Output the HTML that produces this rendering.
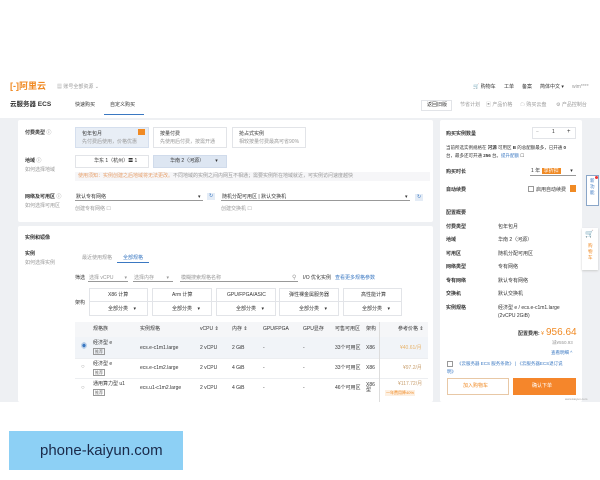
<!DOCTYPE html>
<html><head><meta charset="utf-8"><style>
*{margin:0;padding:0;box-sizing:border-box}
body{width:600px;height:480px;background:#fff;position:relative;overflow:hidden;font-family:"Liberation Sans","Noto Sans CJK SC",sans-serif;color:#333;font-size:5px}
.a{position:absolute;white-space:nowrap;line-height:1}
.g{color:#999}.b{font-weight:bold}.bl{color:#3a78c2}.o{color:#f08a24}
.card{position:absolute;background:#fff;border-radius:2px}
.box{position:absolute;border:1px solid #e2e4e8;background:#fff}
.sel{position:absolute;border-bottom:1px solid #999;height:8px}
.tag{position:absolute;border:1px solid #999;font-size:4px;padding:0 1px;line-height:5px;color:#666}
</style></head><body>
<div class="a" style="left:10px;top:82px;font-size:9px;color:#f08a24;font-weight:bold">[-]阿里云</div>
<div class="a g" style="left:57px;top:85px">▦ 账号全部资源 ⌄</div>
<div class="a" style="left:473px;top:85px">🛒 购物车</div>
<div class="a" style="left:504px;top:85px">工单</div>
<div class="a" style="left:522px;top:85px">备案</div>
<div class="a" style="left:540px;top:85px">简体中文 ▾</div>
<div class="a g" style="left:572px;top:85px">wim****</div>
<div class="a b" style="left:10px;top:102px;font-size:6.5px">云服务器 ECS</div>
<div class="a" style="left:75px;top:103px">快速购买</div>
<div class="a" style="left:110px;top:103px">自定义购买</div>
<div style="position:absolute;left:104px;top:114px;width:40px;height:1px;background:#3a78c2"></div>
<div class="box" style="left:421px;top:100px;width:31px;height:11px"></div>
<div class="a" style="left:427px;top:103px">返回旧版</div>
<div class="a g" style="left:460px;top:103px">节省计划</div>
<div class="a g" style="left:486px;top:103px">▣ 产品价格</div>
<div class="a g" style="left:520px;top:103px">☁ 购买云盘</div>
<div class="a g" style="left:556px;top:103px">⚙ 产品控制台</div>
<div style="position:absolute;left:0;top:118px;width:600px;height:284px;background:#eef0f3"></div>

<div class="card" style="left:18px;top:120px;width:415px;height:102px">
</div>
<div class="a b" style="left:25px;top:131px">付费类型 <span class="g">ⓘ</span></div>
<div class="box" style="left:75px;top:127px;width:74px;height:21px;background:#e8eef6;border-color:#d5dfee"></div>
<div style="position:absolute;left:138px;top:129px;width:7px;height:6px;background:#f08a24"></div>
<div class="a" style="left:82px;top:132px">包年包月</div><div class="a g" style="left:82px;top:140px">先付费后使用，价格优惠</div>
<div class="box" style="left:153px;top:127px;width:74px;height:21px"></div>
<div class="a" style="left:160px;top:132px">按量付费</div><div class="a g" style="left:160px;top:140px">先使用后付费，按需开通</div>
<div class="box" style="left:232px;top:127px;width:74px;height:21px"></div>
<div class="a" style="left:239px;top:132px">抢占式实例</div><div class="a g" style="left:239px;top:140px">相较按量付费最高可省90%</div>
<div class="a b" style="left:25px;top:159px">地域 <span class="g">ⓘ</span></div><div class="a g" style="left:25px;top:168px">如何选择地域</div>
<div class="box" style="left:75px;top:155px;width:74px;height:13px"></div><div class="a" style="left:94px;top:159px">华东 1（杭州）〓 1</div>
<div class="box" style="left:153px;top:155px;width:74px;height:13px;background:#dde6f2;border-color:#d0dbeb"></div><div class="a" style="left:170px;top:159px">华南 2（河源）&nbsp;&nbsp;&nbsp;&nbsp;&nbsp;&nbsp;&nbsp;&nbsp;▾</div>
<div style="position:absolute;left:75px;top:172px;width:355px;height:9px;background:#f6f6f8"></div>
<div class="a" style="left:78px;top:174px;color:#e8a06a">使用须知：实例创建之后地域将无法更改。<span class="g">不同地域的实例之间内网互不相通；需要实例所在地域就近，可实例访问速度越快</span></div>
<div class="a b" style="left:25px;top:195px">网络及可用区 <span class="g">ⓘ</span></div><div class="a g" style="left:25px;top:204px">如何选择可用区</div>
<div class="sel" style="left:75px;top:193px;width:128px"></div><div class="a" style="left:76px;top:195px">默认专有网络</div><div class="a" style="left:198px;top:195px">▾</div>
<div class="a bl" style="left:207px;top:193px;background:#e4ecf6;padding:1px 2px">↻</div>
<div class="sel" style="left:221px;top:193px;width:189px"></div><div class="a" style="left:222px;top:195px">随机分配可用区 | 默认交换机</div><div class="a" style="left:405px;top:195px">▾</div>
<div class="a bl" style="left:415px;top:194px;background:#e4ecf6;padding:1px 2px">↻</div>
<div class="a g" style="left:75px;top:207px">创建专有网络 ☐</div><div class="a g" style="left:221px;top:207px">创建交换机 ☐</div>

<div class="card" style="left:18px;top:226px;width:415px;height:176px"></div>
<div class="a b" style="left:25px;top:236px">实例和镜像</div>
<div class="a b" style="left:25px;top:252px">实例</div><div class="a g" style="left:25px;top:261px">如何选择实例</div>
<div class="a g" style="left:82px;top:256px">最近使用规格</div>
<div class="a bl" style="left:123px;top:256px">全部规格</div>
<div style="position:absolute;left:117px;top:262px;width:32px;height:1px;background:#3a78c2"></div>
<div class="a" style="left:75px;top:276px">筛选</div>
<div class="sel" style="left:88px;top:274px;width:40px"></div><div class="a g" style="left:89px;top:276px">选择 vCPU&nbsp;&nbsp;&nbsp;&nbsp;&nbsp;&nbsp;&nbsp;&nbsp;▾</div>
<div class="sel" style="left:133px;top:274px;width:40px"></div><div class="a g" style="left:134px;top:276px">选择内存&nbsp;&nbsp;&nbsp;&nbsp;&nbsp;&nbsp;&nbsp;&nbsp;&nbsp;▾</div>
<div class="sel" style="left:180px;top:274px;width:118px"></div><div class="a g" style="left:181px;top:276px">模糊搜索规格名称</div><div class="a g" style="left:292px;top:275px;font-size:6px">⚲</div>
<div class="a" style="left:303px;top:276px">I/O 优化实例</div><div class="a bl" style="left:335px;top:276px">查看更多规格参数</div>
<div class="a" style="left:75px;top:301px">架构</div>
<div class="box" style="left:89px;top:288px;width:59px;height:28px"></div><div class="box" style="left:152px;top:288px;width:60px;height:28px"></div><div class="box" style="left:216px;top:288px;width:60px;height:28px"></div><div class="box" style="left:279px;top:288px;width:60px;height:28px"></div><div class="box" style="left:343px;top:288px;width:59px;height:28px"></div>
<div style="position:absolute;left:89px;top:301px;width:313px;height:1px;background:#e2e4e8"></div>
<div class="a" style="left:108px;top:293px">X86 计算</div><div class="a" style="left:172px;top:293px">Arm 计算</div><div class="a" style="left:227px;top:293px">GPU/FPGA/ASIC</div><div class="a" style="left:289px;top:293px">弹性裸金属服务器</div><div class="a" style="left:361px;top:293px">高性能计算</div>
<div class="a" style="left:108px;top:307px">全部分类&nbsp;&nbsp;&nbsp;&nbsp;▾</div><div class="a" style="left:172px;top:307px">全部分类&nbsp;&nbsp;&nbsp;&nbsp;▾</div><div class="a" style="left:236px;top:307px">全部分类&nbsp;&nbsp;&nbsp;&nbsp;▾</div><div class="a" style="left:299px;top:307px">全部分类&nbsp;&nbsp;&nbsp;&nbsp;▾</div><div class="a" style="left:362px;top:307px">全部分类&nbsp;&nbsp;&nbsp;&nbsp;▾</div>
<div style="position:absolute;left:75px;top:322px;width:353px;height:15px;background:#f5f6f8"></div>
<div style="position:absolute;left:75px;top:337px;width:353px;height:21px;background:#f1f4f8"></div>
<div style="position:absolute;left:75px;top:358px;width:353px;height:1px;background:#eceef1"></div>
<div style="position:absolute;left:75px;top:378px;width:353px;height:1px;background:#eceef1"></div>
<div style="position:absolute;left:379px;top:322px;width:1px;height:80px;background:#ddd"></div>
<div class="a" style="left:93px;top:327px">规格族</div><div class="a" style="left:140px;top:327px">实例规格</div><div class="a" style="left:200px;top:327px">vCPU ⇕</div><div class="a" style="left:232px;top:327px">内存 ⇕</div><div class="a" style="left:263px;top:327px">GPU/FPGA</div><div class="a" style="left:303px;top:327px">GPU显存</div><div class="a" style="left:335px;top:327px">可售可用区</div><div class="a" style="left:366px;top:327px">架构</div><div class="a" style="left:398px;top:327px">参考价格 ⇕</div>
<div class="a bl" style="left:81px;top:344px;font-size:6px">◉</div>
<div class="a g" style="left:81px;top:364px;font-size:6px">○</div><div class="a g" style="left:81px;top:385px;font-size:6px">○</div>
<div class="a" style="left:93px;top:341px">经济型 e</div><span class="tag" style="left:93px;top:348px">推荐</span>
<div class="a" style="left:93px;top:362px">经济型 e</div><span class="tag" style="left:93px;top:369px">推荐</span>
<div class="a" style="left:93px;top:382px">通用算力型 u1</div><span class="tag" style="left:93px;top:389px">推荐</span>
<div class="a" style="left:140px;top:346px">ecs.e-c1m1.large</div><div class="a" style="left:140px;top:366px">ecs.e-c1m2.large</div><div class="a" style="left:140px;top:386px">ecs.u1-c1m2.large</div>
<div class="a" style="left:200px;top:346px">2 vCPU</div><div class="a" style="left:200px;top:366px">2 vCPU</div><div class="a" style="left:200px;top:386px">2 vCPU</div>
<div class="a" style="left:232px;top:346px">2 GiB</div><div class="a" style="left:232px;top:366px">4 GiB</div><div class="a" style="left:232px;top:386px">4 GiB</div>
<div class="a" style="left:263px;top:346px">-</div><div class="a" style="left:263px;top:366px">-</div><div class="a" style="left:263px;top:386px">-</div>
<div class="a" style="left:303px;top:346px">-</div><div class="a" style="left:303px;top:366px">-</div><div class="a" style="left:303px;top:386px">-</div>
<div class="a" style="left:335px;top:346px">33个可用区</div><div class="a" style="left:335px;top:366px">33个可用区</div><div class="a" style="left:335px;top:386px">46个可用区</div>
<div class="a" style="left:366px;top:346px">X86</div><div class="a" style="left:366px;top:366px">X86</div><div class="a" style="left:366px;top:383px">X86<br>型</div>
<div class="a" style="left:400px;top:346px;color:#e8b36a">¥40.61/月</div><div class="a" style="left:403px;top:366px;color:#c9a070">¥97.2/月</div><div class="a" style="left:398px;top:382px;color:#c9a070">¥117.72/月</div>
<div class="a o" style="left:385px;top:390px;background:#fdf0e2;font-size:4px;padding:1px">一年费用降40%</div>

<div class="card" style="left:440px;top:120px;width:142px;height:282px"></div>
<div class="a b" style="left:446px;top:132px">购买实例数量</div>
<div class="box" style="left:532px;top:127px;width:44px;height:12px"></div><div class="a g" style="left:536px;top:130px">−</div><div class="a" style="left:552px;top:130px">1</div><div class="a" style="left:567px;top:129px;font-size:6px">+</div>
<div class="a" style="left:446px;top:146px;font-size:4.5px">当前所选实例规格在 <b>河源</b> 可用区 <b>B</b> 的总配额最多，已开通 <b>0</b></div>
<div class="a" style="left:446px;top:154px;font-size:4.5px">台，最多还可开通 <b>256</b> 台。<span class="bl">提升配额</span> ☐</div>
<div class="a b" style="left:446px;top:170px">购买时长</div>
<div class="sel" style="left:530px;top:166px;width:46px;height:10px"></div><div class="a" style="left:531px;top:169px">1 年 <span style="background:#f08a24;color:#fff;padding:0 2px">享折扣</span>&nbsp;&nbsp;&nbsp;&nbsp;&nbsp;&nbsp;&nbsp;▾</div>
<div class="a b" style="left:446px;top:188px">自动续费</div>
<div class="box" style="left:528px;top:186px;width:6px;height:6px;border-color:#999"></div><div class="a" style="left:536px;top:188px">启用自动续费</div>
<div style="position:absolute;left:570px;top:185px;width:6px;height:7px;background:#f08a24"></div>
<div class="a b" style="left:446px;top:211px">配置概要</div>
<div class="a b" style="left:446px;top:225px">付费类型</div><div class="a" style="left:498px;top:225px">包年包月</div>
<div class="a b" style="left:446px;top:238px">地域</div><div class="a" style="left:498px;top:238px">华南 2（河源）</div>
<div class="a b" style="left:446px;top:252px">可用区</div><div class="a" style="left:498px;top:252px">随机分配可用区</div>
<div class="a b" style="left:446px;top:265px">网络类型</div><div class="a" style="left:498px;top:265px">专有网络</div>
<div class="a b" style="left:446px;top:279px">专有网络</div><div class="a" style="left:498px;top:279px">默认专有网络</div>
<div class="a b" style="left:446px;top:292px">交换机</div><div class="a" style="left:498px;top:292px">默认交换机</div>
<div class="a b" style="left:446px;top:306px">实例规格</div><div class="a" style="left:498px;top:306px">经济型 e / ecs.e-c1m1.large</div><div class="a" style="left:498px;top:314px">(2vCPU 2GiB)</div>
<div class="a b" style="left:518px;top:332px">配置费用: <span class="o" style="font-weight:normal">¥</span></div>
<div class="a o" style="left:546px;top:328px;font-size:10px">956.64</div>
<div class="a g" style="left:552px;top:341px;font-size:4.5px">减¥550.93</div>
<div class="a bl" style="left:551px;top:351px;font-size:4.5px">查看明细 ^</div>
<div class="box" style="left:447px;top:361px;width:6px;height:6px;border-color:#999"></div>
<div class="a bl" style="left:457px;top:362px;font-size:4.5px">《云服务器 ECS 服务条款》 | 《云服务器ECS退订说</div>
<div class="a bl" style="left:447px;top:370px;font-size:4.5px">明》</div>
<div class="box" style="left:447px;top:378px;width:62px;height:17px;border-color:#e8c8a6"></div><div class="a o" style="left:463px;top:384px">加入购物车</div>
<div style="position:absolute;left:513px;top:378px;width:63px;height:17px;background:#f5862b"></div><div class="a" style="left:532px;top:384px;color:#fff">确认下单</div>
<div class="a g" style="left:565px;top:398px;font-size:3px">www.kaiyun.com</div>
<div class="box" style="left:586px;top:175px;width:13px;height:31px;border-color:#8aa6c8"></div>
<div class="a bl" style="left:590px;top:178px;line-height:6px;font-size:4.5px;white-space:normal;width:5px">新功能</div>
<div style="position:absolute;left:595px;top:176px;width:3px;height:3px;border-radius:50%;background:#e33"></div>
<div style="position:absolute;left:582px;top:228px;width:16px;height:42px;background:#fff;box-shadow:0 1px 2px #ccc"></div>
<div class="a o" style="left:585px;top:231px;font-size:7px">🛒</div>
<div class="a o" style="left:588px;top:243px;line-height:6px;font-size:4.5px;white-space:normal;width:5px">购物车</div>

<div style="position:absolute;left:9px;top:431px;width:174px;height:39px;background:#8dd0f5"></div>
<div class="a" style="left:40px;top:443px;font-size:15px;color:#1a2a4a">phone-kaiyun.com</div>
</body></html>
